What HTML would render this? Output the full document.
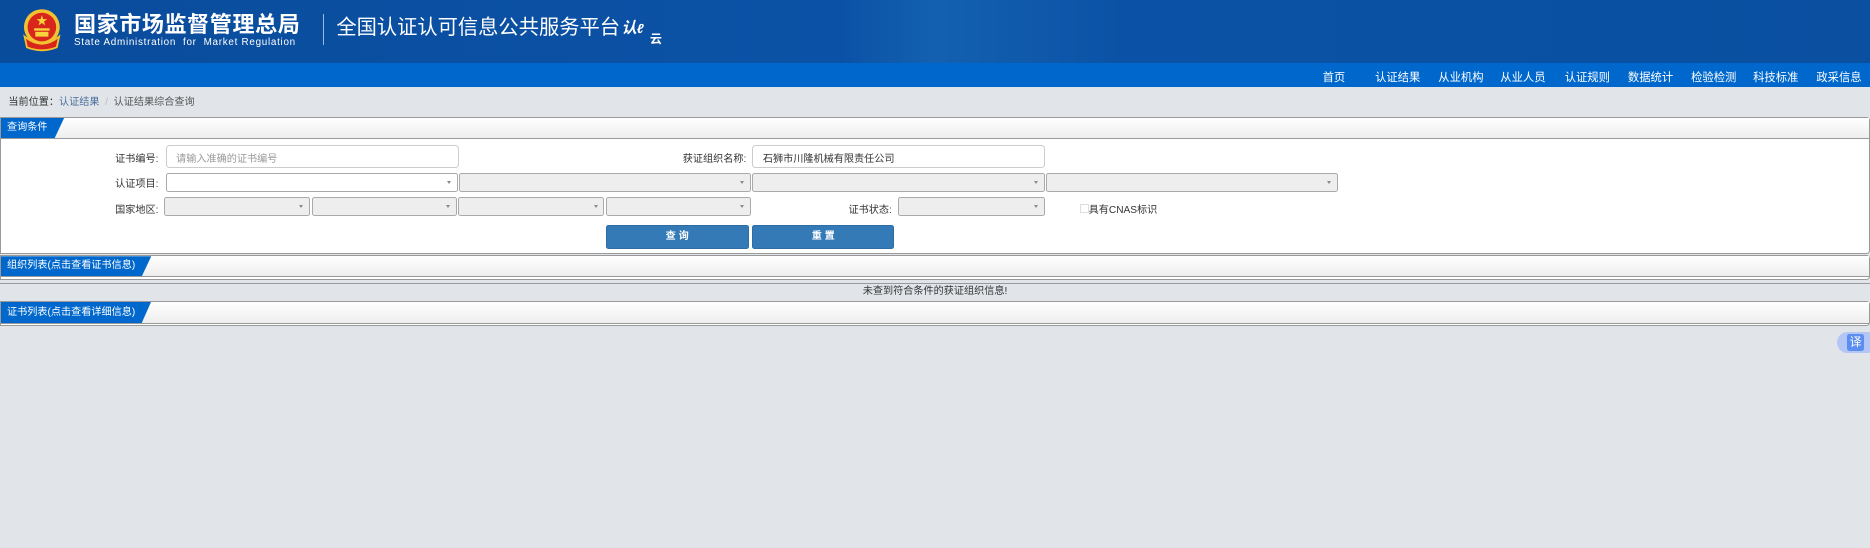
<!DOCTYPE html>
<html><head><meta charset="utf-8"><style>
html,body{margin:0;padding:0;}
body{width:1568px;height:459.5px;zoom:1.19260;background:#e1e5e9;font-family:"Liberation Sans","Noto Sans CJK SC",sans-serif;font-size:9px;color:#333;position:relative;overflow:hidden;}
.hd{position:absolute;left:0;top:0;width:1568px;height:53px;background:linear-gradient(90deg,#0a4c9c 0%,#0b52a6 45%,#1460b0 50%,#0b52a6 60%,#0a4fa0 100%);}
.ab{position:absolute;white-space:nowrap;}
.nav{position:absolute;left:0;top:53px;width:1568px;height:20px;background:#0068cc;}
.nav span{position:absolute;top:7px;color:#fff;font-size:9.5px;line-height:11px;}
.panel{position:absolute;left:0;width:1566px;border:1px solid #999;border-radius:0 3px 3px 0;background:#fff;}
.ph{height:17px;background:linear-gradient(#fff,#eee);border-bottom:1px solid #999;position:relative;}
.tab{position:absolute;left:0;top:0;height:17px;background:#0068cc;color:#fff;font-size:8.5px;line-height:17px;padding-left:5px;clip-path:polygon(0 0,100% 0,calc(100% - 8px) 100%,0 100%);}
.lbl{position:absolute;text-align:right;font-size:8.5px;line-height:10px;color:#333;}
.inp{position:absolute;height:18px;border:1px solid #ccc;border-radius:3px;background:#fff;box-sizing:border-box;font-size:8.5px;padding-left:8px;}
.sel{position:absolute;height:16px;border:1px solid #aaa;border-radius:2px;background:#eee;box-sizing:border-box;}
.sel:after{content:"";position:absolute;right:5px;top:6px;border:2px solid transparent;border-top:3px solid #888;}
.btn{position:absolute;height:20px;background:#337ab7;border:1px solid #2e6da4;border-radius:2px;color:#fff;font-size:8.5px;font-weight:bold;text-align:center;line-height:19px;box-sizing:border-box;}
</style></head><body>
<div class="hd">
 <svg class="ab" style="left:18px;top:7px" width="35" height="38" viewBox="0 0 35 38">
  <circle cx="17.5" cy="16" r="15" fill="#f2c230"/><circle cx="17.5" cy="16" r="12" fill="#d9261c"/>
  <polygon points="17.5,6 18.6,9.3 22,9.3 19.3,11.3 20.3,14.6 17.5,12.6 14.7,14.6 15.7,11.3 13,9.3 16.4,9.3" fill="#f7d23a"/>
  <rect x="11" y="17" width="13" height="2" fill="#f7d23a"/><rect x="12" y="20" width="11" height="4" fill="#f7d23a"/>
  <path d="M3 24 Q17.5 36 32 24 L30 33 Q17.5 38 5 33Z" fill="#d9261c" stroke="#f2c230" stroke-width="1.5"/>
 </svg>
 <div class="ab" style="left:62px;top:12px;color:#fff;font-size:18.5px;line-height:19px;font-weight:bold;letter-spacing:0.5px;">国家市场监督管理总局</div>
 <div class="ab" style="left:62px;top:32px;color:#fff;font-size:8.3px;line-height:9px;letter-spacing:0.6px;">State Administration&nbsp; for&nbsp; Market Regulation</div>
 <div class="ab" style="left:271px;top:12px;width:1px;height:26px;background:#9bb8de;"></div>
 <div class="ab" style="left:282px;top:14px;color:#fff;font-size:17px;line-height:19px;">全国认证认可信息公共服务平台</div>
 <div class="ab" style="left:521px;top:18px;color:#fff;font-size:13px;line-height:14px;font-style:italic;font-weight:bold;">认<span style="font-size:11px">ℓ</span></div>
 <div class="ab" style="left:545px;top:28px;color:#fff;font-size:10px;line-height:11px;font-weight:bold;">云</div>
</div>
<div class="nav">
 <span style="left:1109px">首页</span><span style="left:1153px">认证结果</span><span style="left:1206px">从业机构</span><span style="left:1258px">从业人员</span><span style="left:1312px">认证规则</span><span style="left:1365px">数据统计</span><span style="left:1418px">检验检测</span><span style="left:1470px">科技标准</span><span style="left:1523px">政采信息</span>
</div>
<div class="ab" style="left:7px;top:81px;font-size:8.5px;line-height:10px;color:#333;">当前位置：<span style="color:#4a6f9a">认证结果</span> <span style="color:#bbb">&nbsp;/&nbsp;</span> <span style="color:#555">认证结果综合查询</span></div>

<div class="panel" style="top:98px;height:113px;">
 <div class="ph"><div class="tab" style="width:48px;">查询条件</div></div>
 <div class="lbl" style="left:60px;width:72px;top:30px;">证书编号:</div>
 <div class="inp" style="left:138px;top:23px;width:246px;height:19px;color:#999;line-height:17px;padding-top:3px;">请输入准确的证书编号</div>
 <div class="lbl" style="left:540px;width:85px;top:30px;">获证组织名称:</div>
 <div class="inp" style="left:630px;top:23px;width:245px;height:19px;color:#333;line-height:17px;padding-top:3px;">石狮市川隆机械有限责任公司</div>
 <div class="lbl" style="left:60px;width:72px;top:51px;">认证项目:</div>
 <div class="sel" style="left:138px;top:46px;width:245px;background:#fff;"></div>
 <div class="sel" style="left:384px;top:46px;width:245px;"></div>
 <div class="sel" style="left:630px;top:46px;width:245px;"></div>
 <div class="sel" style="left:876px;top:46px;width:245px;"></div>
 <div class="lbl" style="left:60px;width:72px;top:73px;">国家地区:</div>
 <div class="sel" style="left:137px;top:66px;width:122px;"></div>
 <div class="sel" style="left:261px;top:66px;width:121px;"></div>
 <div class="sel" style="left:383px;top:66px;width:123px;"></div>
 <div class="sel" style="left:507px;top:66px;width:122px;"></div>
 <div class="lbl" style="left:680px;width:67px;top:73px;">证书状态:</div>
 <div class="sel" style="left:752px;top:66px;width:123px;"></div>
 <div class="ab" style="left:905px;top:72px;width:6px;height:6px;border:1px solid #ddd;"></div>
 <div class="ab" style="left:912px;top:73px;font-size:8.5px;line-height:10px;">具有CNAS标识</div>
 <div class="btn" style="left:507px;top:90px;width:120px;">查 询</div>
 <div class="btn" style="left:630px;top:90px;width:119px;">重 置</div>
</div>

<div class="panel" style="top:214px;height:19px;">
 <div class="ph"><div class="tab" style="width:121px;">组织列表(点击查看证书信息)</div></div>
</div>
<div class="ab" style="left:0;top:237px;width:1568px;height:14px;border-top:1px solid #999;text-align:center;font-size:8.5px;line-height:14px;">未查到符合条件的获证组织信息!</div>
<div class="panel" style="top:252px;height:20px;">
 <div class="ph" style="height:18px;"><div class="tab" style="width:121px;height:18px;line-height:18px;">证书列表(点击查看详细信息)</div></div>
</div>
<div class="ab" style="left:1540px;top:278px;width:35px;height:18px;border-radius:9px;background:#b3c6f5;"></div>
<div class="ab" style="left:1549px;top:280px;width:14px;height:14px;background:#5b8ef0;color:#fff;font-size:10px;line-height:14px;text-align:center;border-radius:2px;">译</div>
</body></html>
